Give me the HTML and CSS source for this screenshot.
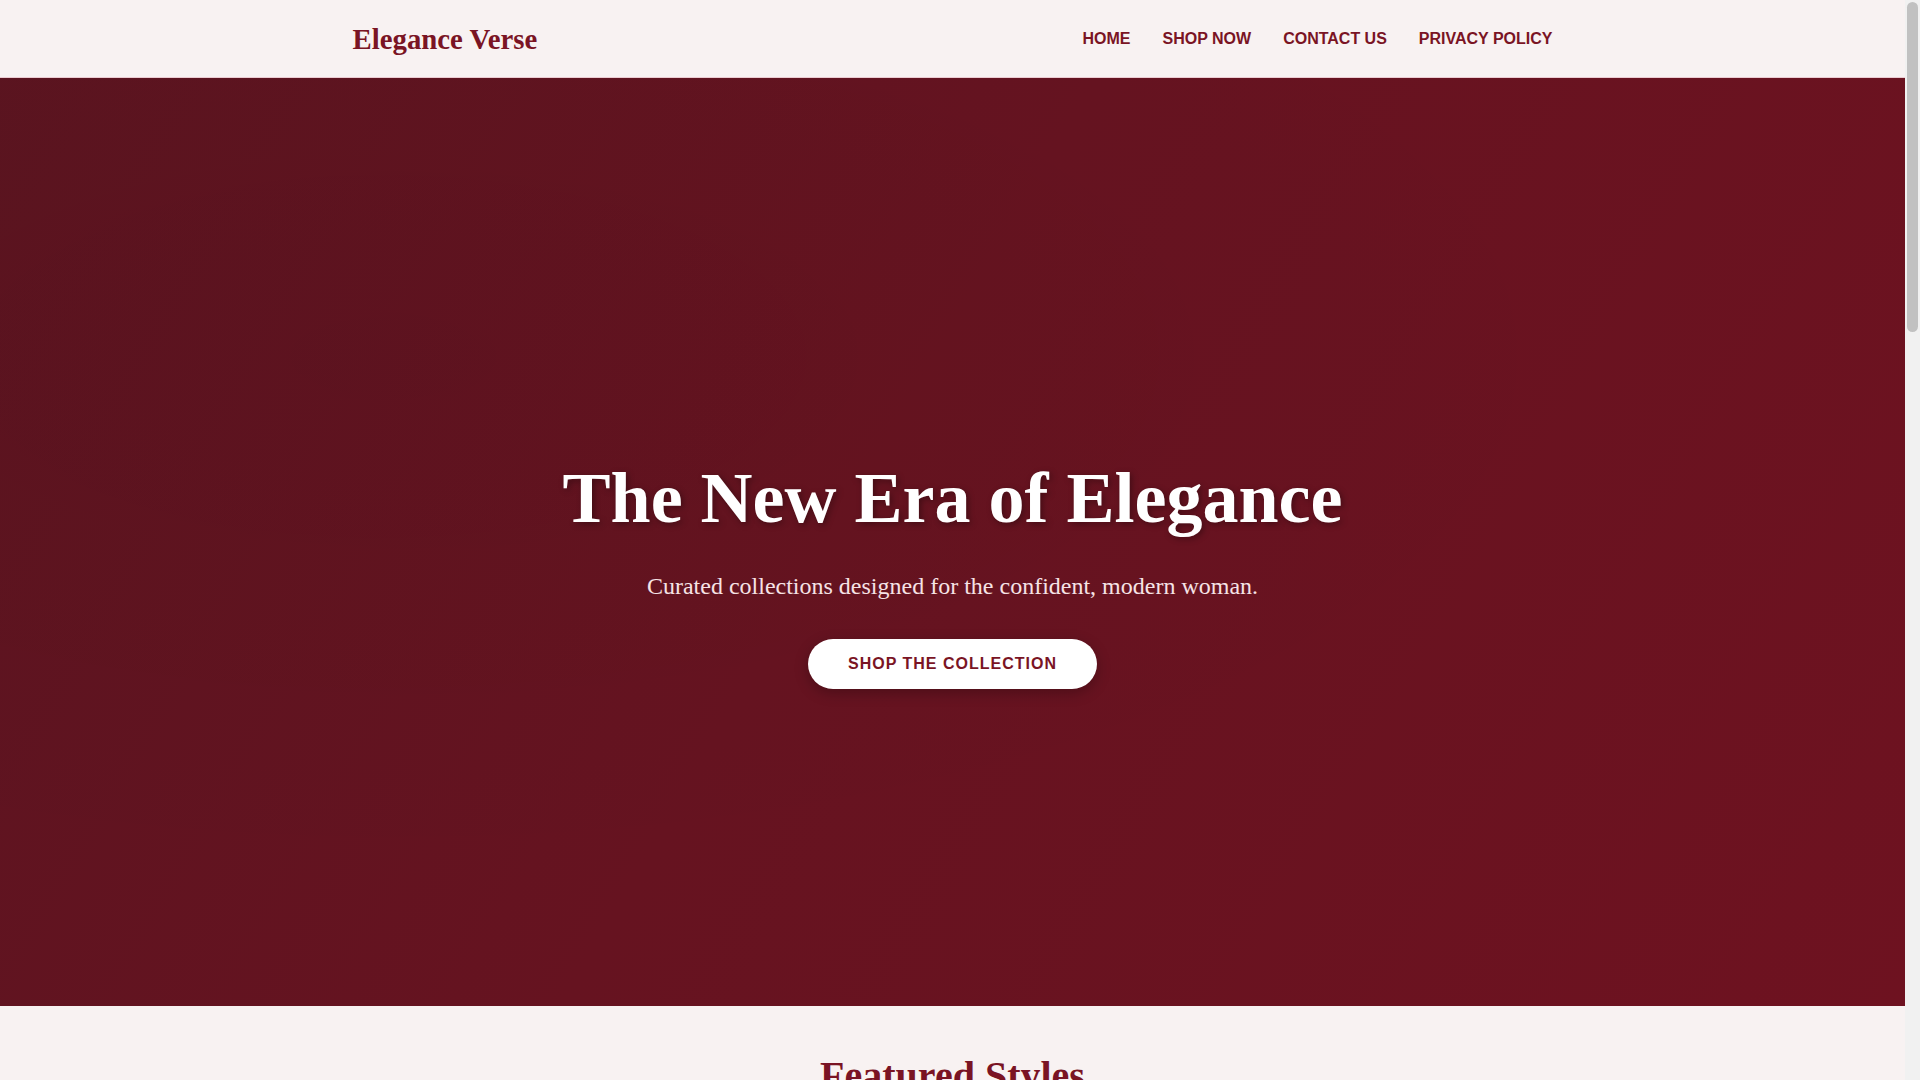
FILE: index.html
```html
<!DOCTYPE html>
<html lang="en">
<head>
<meta charset="utf-8">
<title>Elegance Verse</title>
<link rel="stylesheet" href="styles.css">
</head>
<body>
<div class="page">
  <header class="site-header">
    <div class="container header-inner">
      <a class="logo" href="#">Elegance Verse</a>
      <nav class="main-nav">
        <a href="#">Home</a>
        <a href="#">Shop Now</a>
        <a href="#">Contact Us</a>
        <a href="#">Privacy Policy</a>
      </nav>
    </div>
  </header>
  <section class="hero">
    <div class="hero-content">
      <h1 class="hero-title">The New Era of Elegance</h1>
      <p class="hero-subtitle">Curated collections designed for the confident, modern woman.</p>
      <a class="btn-hero" href="#">Shop the Collection</a>
    </div>
  </section>
  <section class="featured">
    <div class="container">
      <h2 class="section-title">Featured Styles</h2>
      <div class="product-grid">
        <div class="product-card"></div>
        <div class="product-card"></div>
        <div class="product-card"></div>
      </div>
    </div>
  </section>
</div>
<div class="scrollbar" aria-hidden="true"><div class="scrollbar-thumb"></div></div>
</body>
</html>
```
FILE: styles.css
```css
* { box-sizing: border-box; }

html, body {
  margin: 0;
  padding: 0;
}

body {
  display: flex;
  align-items: flex-start;
  background: #f8f2f2;
  font-family: "Liberation Serif", "Times New Roman", serif;
  color: #333;
}

.page {
  flex: 1;
  min-width: 0;
}

.scrollbar {
  flex: 0 0 15px;
  height: 1080px;
  background: #f1f1f1;
  padding: 2px 2px 0;
}

.scrollbar-thumb {
  height: 330px;
  background: #c1c1c1;
  border-radius: 6px;
}

a { text-decoration: none; }

.container {
  max-width: 1200px;
  margin: 0 auto;
}

.site-header {
  background: #f8f2f2;
  border-bottom: 1px solid #ecccd2;
}

.header-inner {
  height: 77px;
  display: flex;
  align-items: center;
  justify-content: space-between;
}

.logo {
  font-family: "Liberation Serif", "Times New Roman", serif;
  font-weight: 700;
  font-size: 28.8px;
  color: #7a1424;
  padding-top: 2px;
}

.main-nav {
  display: flex;
  gap: 32px;
}

.main-nav a {
  font-family: "Liberation Sans", Arial, sans-serif;
  font-weight: 700;
  font-size: 16px;
  text-transform: uppercase;
  color: #7a1424;
}

.hero {
  height: 928px;
  padding-top: 60px;
  display: flex;
  align-items: center;
  justify-content: center;
  text-align: center;
  background:
    radial-gradient(ellipse at 20% 30%, rgba(0,0,0,0.04), transparent 60%),
    linear-gradient(120deg, #5c1420 0%, #661320 45%, #6e1220 100%);
  color: #fff;
}

.hero-title {
  margin: 0 0 24px;
  font-family: "Liberation Serif", "Times New Roman", serif;
  font-weight: 700;
  font-size: 72px;
  line-height: 1.2;
  text-shadow: 2px 2px 6px rgba(0, 0, 0, 0.35);
}

.hero-subtitle {
  margin: 0 0 34px;
  padding-top: 1px;
  font-size: 24px;
  line-height: 1.6;
  color: #f6e3e6;
}

.btn-hero {
  display: inline-block;
  padding: 16px 40px;
  border-radius: 50px;
  background: #fff;
  color: #7a1424;
  font-family: "Liberation Sans", Arial, sans-serif;
  font-weight: 700;
  font-size: 16px;
  line-height: 18px;
  letter-spacing: 1px;
  text-transform: uppercase;
  box-shadow: 0 4px 14px rgba(0, 0, 0, 0.25);
}

.featured {
  padding: 46px 0 80px;
  background: #f8f2f2;
}

.section-title {
  margin: 0 0 40px;
  text-align: center;
  font-family: "Liberation Serif", "Times New Roman", serif;
  font-weight: 700;
  font-size: 40px;
  line-height: 1.2;
  color: #7a1424;
}

.product-grid {
  display: grid;
  grid-template-columns: repeat(3, 1fr);
  gap: 32px;
}

.product-card {
  height: 420px;
  background: #fff;
  border-radius: 8px;
}
```
